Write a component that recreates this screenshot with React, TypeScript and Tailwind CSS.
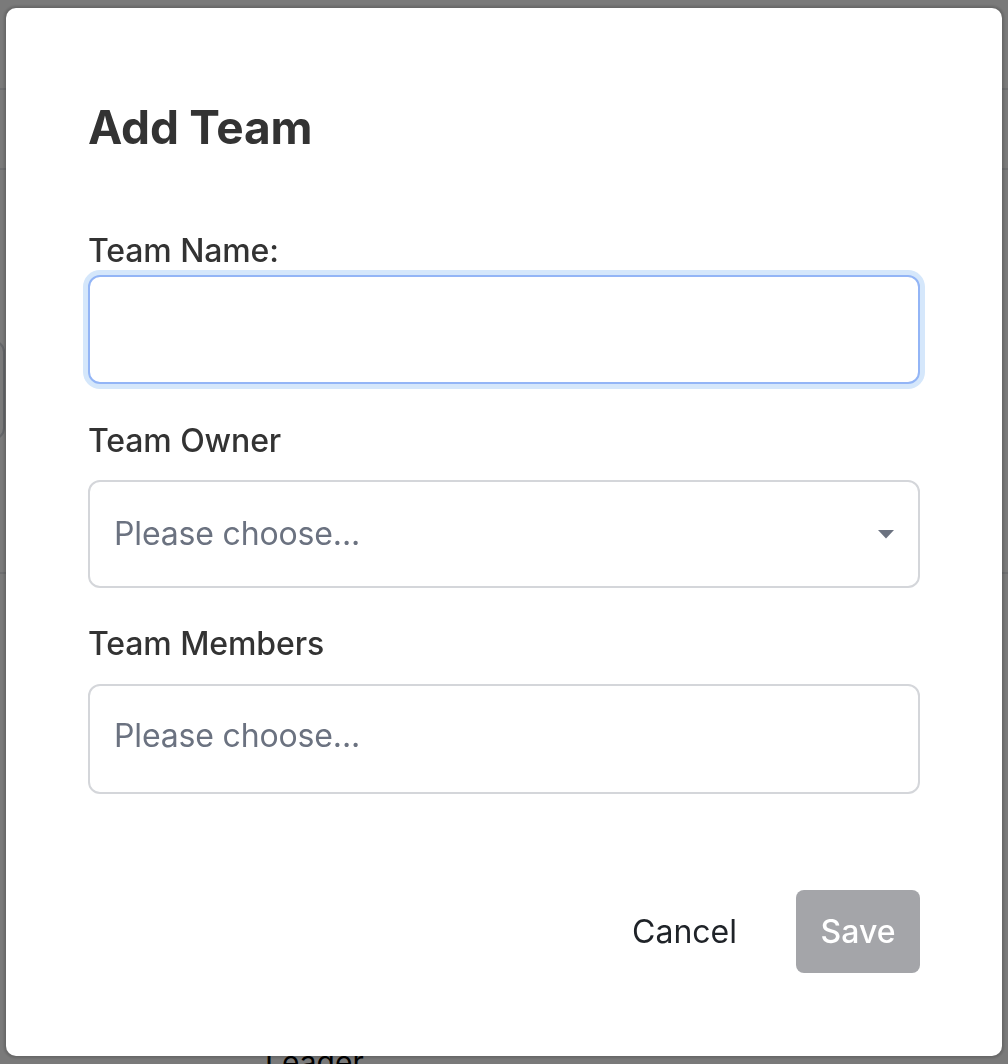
import React from "react";

const font = { fontFamily: "Inter, 'Noto Sans', sans-serif" };

function Background() {
  return (
    <div className="min-h-[1064px] w-full bg-white" style={font}>
      <div className="h-[90px] border-b-2 border-gray-200" />
      <div className="h-[80px] border-b-2 border-gray-200" />
      <div className="h-[170px]" />
      <div className="ml-[-300px] h-[100px] w-[305px] rounded-xl border-2 border-gray-300" />
      <div className="h-[60px]" />
      <div className="ml-[-100px] flex h-[20px] items-center text-[28px] text-black">Owner</div>
      <div className="h-[54px] border-b-2 border-gray-200" />
      <div className="h-[470px]" />
      <div className="pl-[265px] text-[30px] leading-[36px] text-black">Leader</div>
    </div>
  );
}

function Caret() {
  return (
    <svg width="16" height="9" viewBox="0 0 16 9" className="shrink-0">
      <polygon points="0,0 16,0 8,8.5" fill="#6b7280" />
    </svg>
  );
}

export default function App() {
  return (
    <div className="relative h-[1064px] w-[1008px] overflow-hidden">
      <Background />
      <div className="fixed inset-0 flex items-center justify-center bg-black/[0.52]">
        <div
          className="flex h-[1048px] w-[996px] flex-col rounded-[10px] bg-white px-[82px] pt-[91px] shadow-[0_0_3px_2px_rgba(0,0,0,0.18)]"
          style={font}
        >
          <h1 className="text-[46px] font-bold leading-[56px] tracking-[-0.2px] text-[#333333]">Add Team</h1>

          <label className="mt-[72px] block text-[32px] font-medium leading-[48px] tracking-[-0.1px] text-[#333333]">Team Name:</label>
          <input
            type="text"
            className="h-[109px] w-full shrink-0 rounded-[12px] border-2 border-[#93b5f6] bg-white px-[24px] text-[32px] outline-none ring-[5px] ring-[#d5e7fb]"
          />

          <label className="mt-[33px] block text-[32px] font-medium leading-[48px] tracking-[-0.1px] text-[#333333]">Team Owner</label>
          <div className="mt-[15px] flex h-[108px] w-full shrink-0 items-center justify-between rounded-[12px] border-2 border-[#d4d6da] pl-[24px] pr-[24px]">
            <span className="text-[32px] leading-[40px] tracking-[-0.15px] text-[#6b7280]">Please choose...</span>
            <Caret />
          </div>

          <label className="mt-[32px] block text-[32px] font-medium leading-[48px] tracking-[-0.1px] text-[#333333]">Team Members</label>
          <div className="mt-[16px] flex h-[110px] w-full shrink-0 items-center rounded-[12px] border-2 border-[#d4d6da] pb-[6px] pl-[24px]">
            <span className="text-[32px] leading-[40px] tracking-[-0.15px] text-[#6b7280]">Please choose...</span>
          </div>

          <div className="mt-[96px] flex items-center justify-end gap-[59px]">
            <button className="text-[32px] leading-[40px] text-[#1f2328]">Cancel</button>
            <button className="flex h-[83px] w-[124px] items-center justify-center rounded-[8px] bg-[#a4a5a9] text-[32px] font-medium leading-[40px] text-white">
              Save
            </button>
          </div>
        </div>
      </div>
    </div>
  );
}
